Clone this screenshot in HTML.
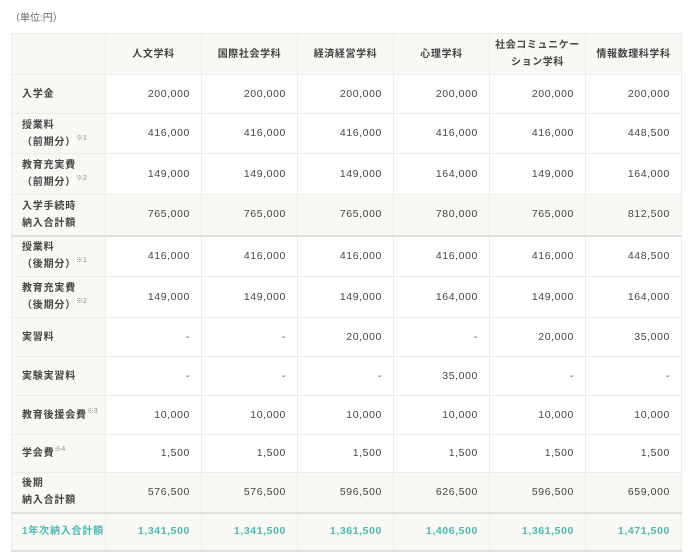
<!DOCTYPE html>
<html><head><meta charset="utf-8"><style>
body{margin:0;background:#fff;font-family:"Liberation Sans","Noto Sans CJK JP",sans-serif;color:#444;}
.unit{position:absolute;left:10px;top:9px;font-size:10px;color:#666;}
table{position:absolute;left:11px;top:33px;border-collapse:collapse;table-layout:fixed;width:670px;font-size:10px;}
td,th{border:1px solid #ececea;padding:0 11px;text-align:right;letter-spacing:0.6px;line-height:17px}
td{font-size:10.5px}
tr{height:39px}
th{font-weight:bold;text-align:center;background:#f8f8f4;height:40px;padding:0 4px}
td:first-child{text-align:left;font-weight:bold;background:#f8f8f4;padding:0 0 0 10px;white-space:nowrap;font-size:10px;letter-spacing:0.8px}
tr.s td{background:#f8f8f4}
tr.tb td{border-top:2px solid #e0e0dc}
tr.t td{color:#4cb8b0;font-weight:bold;background:#f8f8f4;border-top:2px solid #e0e0dc;border-bottom:2px solid #e0e0dc}
sup{font-size:7px;color:#888;vertical-align:top;font-weight:normal;line-height:10px;letter-spacing:0}
</style></head><body>
<div class="unit">（単位:円）</div>
<table>
<colgroup><col style="width:94px"><col span="6" style="width:96px"></colgroup>
<tr><th></th><th>人文学科</th><th>国際社会学科</th><th>経済経営学科</th><th>心理学科</th><th>社会コミュニケー<br>ション学科</th><th>情報数理科学科</th></tr>
<tr><td>入学金</td><td>200,000</td><td>200,000</td><td>200,000</td><td>200,000</td><td>200,000</td><td>200,000</td></tr>
<tr style="height:40px"><td>授業料<br>（前期分）<sup>※1</sup></td><td>416,000</td><td>416,000</td><td>416,000</td><td>416,000</td><td>416,000</td><td>448,500</td></tr>
<tr style="height:41px"><td>教育充実費<br>（前期分）<sup>※2</sup></td><td>149,000</td><td>149,000</td><td>149,000</td><td>164,000</td><td>149,000</td><td>164,000</td></tr>
<tr class="s" style="height:41px"><td>入学手続時<br>納入合計額</td><td>765,000</td><td>765,000</td><td>765,000</td><td>780,000</td><td>765,000</td><td>812,500</td></tr>
<tr class="tb" style="height:41px"><td>授業料<br>（後期分）<sup>※1</sup></td><td>416,000</td><td>416,000</td><td>416,000</td><td>416,000</td><td>416,000</td><td>448,500</td></tr>
<tr style="height:41px"><td>教育充実費<br>（後期分）<sup>※2</sup></td><td>149,000</td><td>149,000</td><td>149,000</td><td>164,000</td><td>149,000</td><td>164,000</td></tr>
<tr><td>実習料</td><td>-</td><td>-</td><td>20,000</td><td>-</td><td>20,000</td><td>35,000</td></tr>
<tr><td>実験実習料</td><td>-</td><td>-</td><td>-</td><td>35,000</td><td>-</td><td>-</td></tr>
<tr><td>教育後援会費<sup>※3</sup></td><td>10,000</td><td>10,000</td><td>10,000</td><td>10,000</td><td>10,000</td><td>10,000</td></tr>
<tr style="height:38px"><td>学会費<sup>※4</sup></td><td>1,500</td><td>1,500</td><td>1,500</td><td>1,500</td><td>1,500</td><td>1,500</td></tr>
<tr class="s" style="height:40px"><td>後期<br>納入合計額</td><td>576,500</td><td>576,500</td><td>596,500</td><td>626,500</td><td>596,500</td><td>659,000</td></tr>
<tr class="t" style="height:38px"><td style="color:#4cb8b0">1年次納入合計額</td><td>1,341,500</td><td>1,341,500</td><td>1,361,500</td><td>1,406,500</td><td>1,361,500</td><td>1,471,500</td></tr>
</table>
</body></html>
